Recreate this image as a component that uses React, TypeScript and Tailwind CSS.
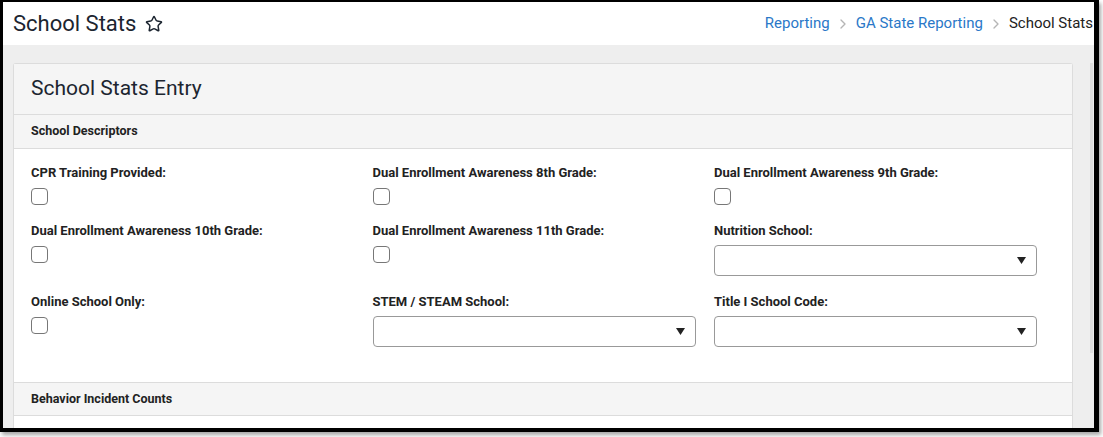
import { Star, ChevronRight } from "lucide-react"

type Field =
  | { label: string; kind: "check" }
  | { label: string; kind: "select" }

const fields: Field[] = [
  { label: "CPR Training Provided:", kind: "check" },
  { label: "Dual Enrollment Awareness 8th Grade:", kind: "check" },
  { label: "Dual Enrollment Awareness 9th Grade:", kind: "check" },
  { label: "Dual Enrollment Awareness 10th Grade:", kind: "check" },
  { label: "Dual Enrollment Awareness 11th Grade:", kind: "check" },
  { label: "Nutrition School:", kind: "select" },
  { label: "Online School Only:", kind: "check" },
  { label: "STEM / STEAM School:", kind: "select" },
  { label: "Title I School Code:", kind: "select" },
]

function FieldCell({ field }: { field: Field }) {
  return (
    <div className="flex flex-col">
      <label className="h-[16px] mb-[6px] text-[13px] leading-[16px] font-bold text-[#222] whitespace-nowrap">
        {field.label}
      </label>
      {field.kind === "check" ? (
        <div className="h-[18px] pt-[1px]">
          <span className="block w-[17px] h-[17px] border border-[#777] rounded-[4px] bg-white" />
        </div>
      ) : (
        <div className="h-[31px] w-full border border-[#999] rounded-[4px] bg-white flex items-center justify-end pr-[10px]">
          <svg width="9" height="7" viewBox="0 0 9 7" aria-hidden="true">
            <path d="M0 0 H9 L4.5 7 Z" fill="#222" />
          </svg>
        </div>
      )}
    </div>
  )
}

export default function App() {
  return (
    <div className="w-[1103px] h-[437px] bg-white font-['Roboto','Liberation_Sans',sans-serif] overflow-hidden">
      <div className="w-[1099px] h-[432px] border-l-[3px] border-t-[2px] border-r-[5px] border-b-[4px] border-black shadow-[2px_3px_4px_rgba(0,0,0,0.35)] flex flex-col overflow-hidden">
        {/* page header */}
        <div className="h-[43px] shrink-0 bg-white flex items-center overflow-hidden">
          <div className="flex items-center pl-[10px] shrink-0">
            <h1 className="text-[22px] leading-[28px] text-[#1c2530] font-normal">School Stats</h1>
            <Star size={18} strokeWidth={2} className="ml-[9px] text-[#1c2530]" />
          </div>
          <div className="flex-1" />
          <nav className="flex items-center whitespace-nowrap text-[15px] shrink-0 mr-[1px]">
            <span className="text-[#2a78c8]">Reporting</span>
            <ChevronRight size={16} className="mx-[5px] text-[#b5b5b5]" />
            <span className="text-[#2a78c8]">GA State Reporting</span>
            <ChevronRight size={16} className="mx-[5px] text-[#b5b5b5]" />
            <span className="text-[#222]">School Stats</span>
          </nav>
        </div>

        {/* content area */}
        <div className="flex-1 bg-[#eeeeee] flex pt-[18px] pl-[10px] overflow-hidden">
          <div className="w-[1060px] shrink-0 border border-[#dcdcdc] border-b-0 rounded-t-[3px] bg-white flex flex-col">
            <div className="h-[51px] bg-[#f5f5f5] border-b border-[#dcdcdc] flex items-center pl-[17px]">
              <h2 className="text-[21px] text-[#1c2530] font-normal">School Stats Entry</h2>
            </div>
            <div className="h-[34px] bg-[#f5f5f5] border-b border-[#dcdcdc] flex items-center pl-[17px]">
              <h3 className="text-[12.5px] font-bold text-[#222]">School Descriptors</h3>
            </div>
            <div className="pt-[16px] pb-[35px] pl-[17px]">
              <div className="grid grid-cols-[323px_323px_323px] gap-x-[18.5px] gap-y-[18px]">
                {fields.map(f => (
                  <FieldCell key={f.label} field={f} />
                ))}
              </div>
            </div>
            <div className="h-[34px] bg-[#f5f5f5] border-y border-[#dcdcdc] flex items-center pl-[17px]">
              <h3 className="text-[12.5px] font-bold text-[#222]">Behavior Incident Counts</h3>
            </div>
            <div className="flex-1 bg-white" />
          </div>
          <div className="flex-1 flex justify-end pr-[1px]">
            <div className="w-[3px] h-[290px] bg-[#dedede]" />
          </div>
        </div>
      </div>
    </div>
  )
}
